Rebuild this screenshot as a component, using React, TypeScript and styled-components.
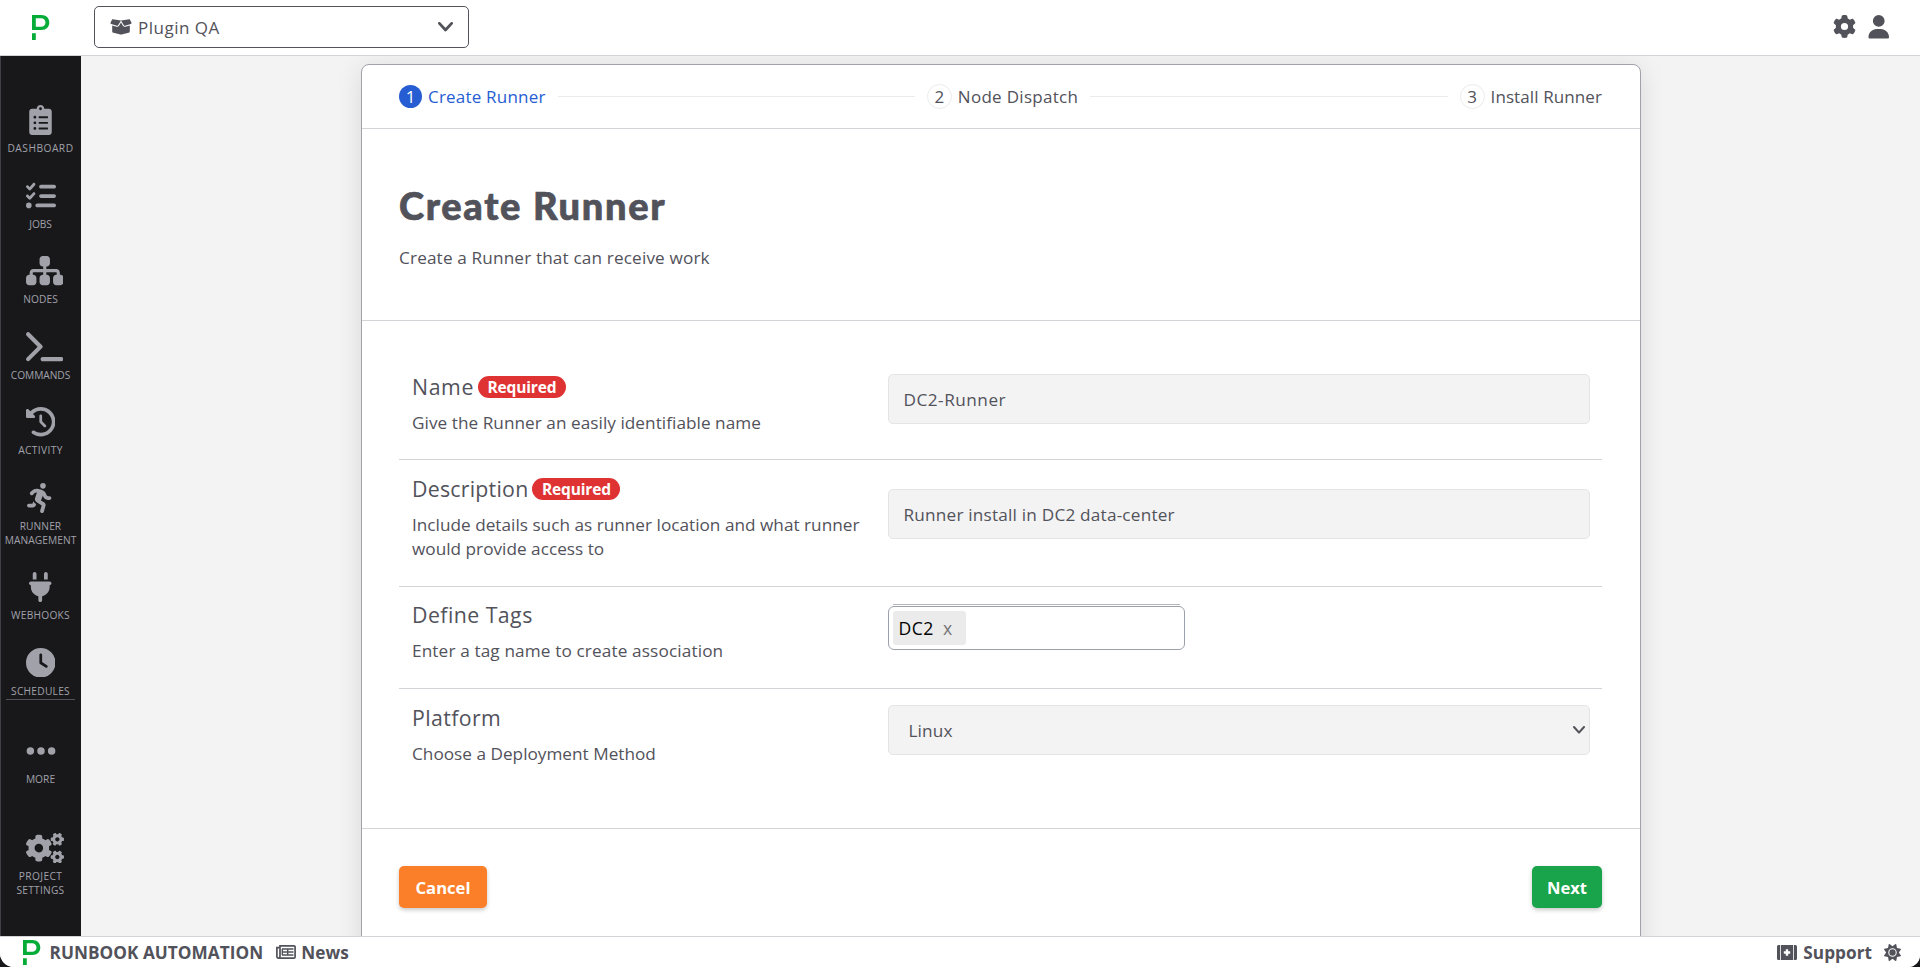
import React from "react";
import styled, { createGlobalStyle } from "styled-components";
import {
  FaBoxOpen, FaClock, FaClockRotateLeft, FaEllipsis, FaGear, FaListCheck,
  FaPersonRunning, FaPlug, FaSitemap, FaSun, FaTerminal, FaUser,
} from "react-icons/fa6";
import { FaClipboardList, FaCogs } from "react-icons/fa";

const ink = "#52525b";
const line = "#d4d4d8";

const GlobalStyle = createGlobalStyle`
  * { box-sizing: border-box; }
  html { background: #18181b; }
  body {
    margin: 0;
    font-family: "Open Sans", "Liberation Sans", sans-serif;
    font-size: 17.2px;
    color: ${ink};
    -webkit-font-smoothing: antialiased;
  }
`;

const Page = styled.div`
  display: flex;
  flex-direction: column;
  width: 100%;
  height: 967px;
  overflow: hidden;
  background: #f3f3f3;
  border-radius: 0 0 12px 14px;
`;

const Header = styled.header`
  display: flex;
  align-items: flex-start;
  flex: 0 0 56px;
  padding: 6px 30px 0 32px;
  background: #fff;
  border-bottom: 1px solid ${line};
`;

const HeaderLogo = styled.div`
  display: flex;
  width: 62px;
  padding-top: 9px;
`;

const ProjectPicker = styled.button`
  display: flex;
  align-items: center;
  width: 375px;
  height: 42px;
  padding: 0 15px;
  border: 1px solid ${ink};
  border-radius: 5px;
  background: #fff;
  color: ${ink};
  font: 500 17px/24px "Open Sans", sans-serif;
  letter-spacing: 0.5px;

  span { flex: 1; margin-left: 6px; padding-top: 2px; text-align: left; }
`;

const HeaderActions = styled.div`
  display: flex;
  gap: 11px;
  margin: 9px 0 0 auto;
`;

const Body = styled.div`
  display: flex;
  flex: 0 0 880px;
  overflow: hidden;
`;

const Sidebar = styled.nav`
  display: flex;
  flex-direction: column;
  align-items: center;
  flex: 0 0 81px;
  padding-top: 49px;
  background: #18181b;
  border-left: 1px solid #3f3f46;
`;

const NavItem = styled.a<{ $gap: number }>`
  display: flex;
  flex-direction: column;
  align-items: center;
  width: 80px;
  margin-bottom: ${(p) => p.$gap}px;
  padding-right: 1px;
  color: #a1a1aa;
`;

const NavIcon = styled.div<{ $w: number; $h: number }>`
  display: flex;
  align-items: center;
  justify-content: ${(p) => (p.$w > 30 ? "flex-start" : "center")};
  width: 30px;
  height: 30px;
  margin-bottom: 6px;

  svg {
    flex: none;
    width: ${(p) => p.$w}px;
    height: ${(p) => p.$h}px;
  }
`;

const NavLabel = styled.span<{ $ls: number }>`
  font-size: 10.2px;
  line-height: 14px;
  letter-spacing: ${(p) => p.$ls}px;
  text-align: center;
  white-space: nowrap;
`;

const NavDivider = styled.div`
  width: 69px;
  height: 1px;
  margin: -24.5px 1px 36px 0;
  background: #52525b;
`;

const Main = styled.main`
  flex: 1;
  padding: 8px 0 0 280px;
`;

const Card = styled.section`
  width: 1280px;
  height: 900px;
  background: #fff;
  border: 1px solid #a1a1aa;
  border-radius: 8px;
  box-shadow: 0 4px 26px rgba(0, 0, 0, 0.11);
`;

const Steps = styled.div`
  display: flex;
  align-items: center;
  height: 64px;
  padding: 0 38px 0 37px;
  border-bottom: 1px solid ${line};
`;

const Step = styled.div<{ $active?: boolean; $ls: number }>`
  display: flex;
  align-items: center;
  color: ${(p) => (p.$active ? "#265dd2" : ink)};
  font-weight: 500;
  font-size: 17px;
  line-height: 24px;
  letter-spacing: ${(p) => p.$ls}px;
  white-space: nowrap;
`;

const StepNumber = styled.span<{ $active?: boolean }>`
  display: flex;
  align-items: center;
  justify-content: center;
  width: ${(p) => (p.$active ? 23 : 25)}px;
  height: ${(p) => (p.$active ? 23 : 25)}px;
  margin-right: 6px;
  border: ${(p) => (p.$active ? "none" : "1px solid #ebebeb")};
  border-radius: 50%;
  background: ${(p) => (p.$active ? "#265dd2" : "#fff")};
  color: ${(p) => (p.$active ? "#fff" : ink)};
  letter-spacing: 0;
`;

const StepLine = styled.div`
  flex: 1;
  height: 1px;
  margin: 0 12px;
  background: #ebebed;
`;

const Intro = styled.div`
  height: 192px;
  padding: 54px 37px 0;
  border-bottom: 1px solid ${line};
`;

const Title = styled.h1`
  margin: 0;
  font-family: Lato, "Open Sans", sans-serif;
  font-weight: 900;
  font-size: 38px;
  line-height: 44px;
  letter-spacing: 1.7px;
  -webkit-text-stroke: 0.7px ${ink};
`;

const Lead = styled.p`
  margin: 19px 0 0;
  line-height: 24px;
  letter-spacing: 0.14px;
`;

const Form = styled.div`
  height: 508px;
  padding: 37px 38px 0 37px;
  border-bottom: 1px solid ${line};
`;

const Row = styled.div<{ $tall?: boolean; $last?: boolean }>`
  display: flex;
  height: ${(p) => (p.$tall ? 127 : 102)}px;
  padding: 16px 12px 0;
  border-bottom: ${(p) => (p.$last ? "none" : `1px solid ${line}`)};
`;

const RowText = styled.div<{ $top?: number }>`
  flex: 0 0 477px;
  padding: ${(p) => p.$top ?? 1}px 18px 0 1px;
`;

const RowTitle = styled.div`
  display: flex;
  align-items: center;
  height: 24px;
`;

const RowName = styled.span<{ $ls: number }>`
  font-weight: 500;
  font-size: 21.3px;
  line-height: 24px;
  letter-spacing: ${(p) => p.$ls}px;
`;

const Badge = styled.span`
  height: 22px;
  margin: 0 0 0 4px;
  padding: 0 9.5px;
  border-radius: 11px;
  background: #df3333;
  color: #fff;
  font-weight: 700;
  font-size: 15.5px;
  line-height: 22px;
  letter-spacing: -0.15px;
`;

const RowHelp = styled.p<{ $ls: number }>`
  margin: 12px 0 0;
  line-height: 24px;
  letter-spacing: ${(p) => p.$ls}px;
`;

const Field = styled.div<{ $top?: number; $inset?: number; $ls: number }>`
  display: flex;
  align-items: center;
  justify-content: space-between;
  flex: 0 0 702px;
  height: 50px;
  margin-top: ${(p) => p.$top ?? 0}px;
  padding: 0 4px 0 ${(p) => p.$inset ?? 14.5}px;
  border: 1px solid #e4e4e7;
  border-radius: 5px;
  background: #f3f3f3;
  font-weight: 500;
  letter-spacing: ${(p) => p.$ls}px;
`;

const TagColumn = styled.div`
  display: flex;
  flex-direction: column;
  width: 297px;
  padding-top: 1px;
`;

const TagTopLine = styled.div`
  height: 1px;
  margin: 0 5px 1px;
  background: #b5b5ba;
`;

const TagInput = styled.div`
  display: flex;
  height: 44px;
  padding: 4px;
  border: 1px solid #9ca0ab;
  border-radius: 6px;
  background: #fff;
`;

const Tag = styled.span`
  display: flex;
  align-items: center;
  width: 73px;
  height: 34px;
  padding-left: 5.5px;
  border-radius: 3px;
  background: #ebebeb;
  color: #000;
  font-size: 17.6px;
  line-height: 34px;
  letter-spacing: 0.5px;
`;

const TagRemove = styled.span`
  margin-left: 9px;
  color: #777;
`;

const Actions = styled.div`
  display: flex;
  justify-content: space-between;
  padding: 37px 38px 0 37px;
`;

const Button = styled.button<{ $tone: string; $w: number }>`
  width: ${(p) => p.$w}px;
  height: 42px;
  padding: 0;
  border: 0;
  border-radius: 5px;
  background: ${(p) => p.$tone};
  box-shadow: 0 2px 4px rgba(0, 0, 0, 0.22);
  color: #fff;
  font: 700 16.6px/43px "Open Sans", sans-serif;
`;

const Footer = styled.footer`
  display: flex;
  align-items: flex-start;
  flex: 0 0 31px;
  padding: 3px 19px 0 23px;
  background: #fff;
  border-top: 1px solid ${line};
`;

const FooterText = styled.span<{ $gap: number }>`
  margin-top: 1px;
  margin-left: ${(p) => p.$gap}px;
  font-weight: 700;
  line-height: 24px;
  letter-spacing: 0.04px;
  white-space: nowrap;
`;

const FooterIcon = styled.span<{ $gap: number | "auto"; $w: number; $h: number }>`
  display: flex;
  margin-top: ${(p) => 12 - p.$h / 2}px;
  margin-left: ${(p) => (p.$gap === "auto" ? "auto" : `${p.$gap}px`)};

  svg {
    width: ${(p) => p.$w}px;
    height: ${(p) => p.$h}px;
  }
`;

const Logo = () => (
  <svg width="18" height="25" viewBox="0 0 18 25">
    <path
      fill="#06ac38"
      fillRule="evenodd"
      d="M0 0h9.3C14.3 0 17.3 3 17.3 7.5S14.3 15 9.3 15H0zM3.8 3.3v8.4h5.3c2.7 0 4.4-1.6 4.4-4.2S11.8 3.3 9.1 3.3z"
    />
    <path fill="#06ac38" d="M0 18.2h3.8V25H0z" />
  </svg>
);

const NewspaperIcon = () => (
  <svg viewBox="0 0 20 14" fill="none" stroke="currentColor">
    <path
      strokeWidth="1.7"
      d="M4 .9H18A1.1 1.1 0 0 1 19.1 2V12A1.1 1.1 0 0 1 18 13.1H2.4A1.5 1.5 0 0 1 .9 11.6V2.6H4zM4 2.6V11.5A1.6 1.6 0 0 1 2.4 13.1"
    />
    <path strokeWidth="1.4" d="M6 4H17.5M6 7H17.5M6 10H17.5M11.7 4V10M6.3 4V10" />
  </svg>
);

const FirstAidIcon = () => (
  <svg viewBox="0 0 20 15" fill="currentColor">
    <path d="M1.5 0H3V15H1.5A1.5 1.5 0 0 1 0 13.5V1.5A1.5 1.5 0 0 1 1.5 0z" />
    <path d="M17 0H18.5A1.5 1.5 0 0 1 20 1.5V13.5A1.5 1.5 0 0 1 18.5 15H17z" />
    <path
      fillRule="evenodd"
      d="M3.8 0H16.2V15H3.8zM8.8 4.3V6.3H6.8V8.7H8.8V10.7H11.2V8.7H13.2V6.3H11.2V4.3z"
    />
  </svg>
);

const Chevron = ({ w, h, stroke }: { w: number; h: number; stroke: number }) => (
  <svg width={w} height={h} viewBox={`0 0 ${w} ${h}`} fill="none">
    <path
      d={`M${stroke / 2} ${stroke / 2}L${w / 2} ${h - stroke * 0.7}L${w - stroke / 2} ${stroke / 2}`}
      stroke="currentColor"
      strokeWidth={stroke}
      strokeLinecap="round"
      strokeLinejoin="round"
    />
  </svg>
);

type Nav = { icon: React.ReactNode; w: number; h: number; lines: [string, number][]; gap?: number };

const primaryNav: Nav[] = [
  { icon: <FaClipboardList />, w: 23, h: 30, lines: [["DASHBOARD", 0.5]] },
  { icon: <FaListCheck />, w: 30, h: 30, lines: [["JOBS", -0.1]] },
  { icon: <FaSitemap />, w: 37.5, h: 33.3, lines: [["NODES", 0.1]] },
  { icon: <FaTerminal />, w: 37.5, h: 33.3, lines: [["COMMANDS", -0.05]] },
  { icon: <FaClockRotateLeft />, w: 29.5, h: 29.5, lines: [["ACTIVITY", 0.38]] },
  { icon: <FaPersonRunning />, w: 26.3, h: 30, lines: [["RUNNER", 0.08], ["MANAGEMENT", 0.08]] },
  { icon: <FaPlug />, w: 22.5, h: 30, lines: [["WEBHOOKS", 0.25]] },
  { icon: <FaClock />, w: 29.5, h: 29.5, lines: [["SCHEDULES", 0.25]] },
];

const secondaryNav: Nav[] = [
  { icon: <FaEllipsis />, w: 30, h: 34, lines: [["MORE", 0.05]], gap: 47.3 },
  { icon: <FaCogs />, w: 38, h: 30.4, lines: [["PROJECT", 0.38], ["SETTINGS", 0.24]], gap: 0 },
];

const NavEntry = ({ icon, w, h, lines, gap = 25.5 }: Nav) => (
  <NavItem $gap={gap}>
    <NavIcon $w={w} $h={h}>{icon}</NavIcon>
    {lines.map(([text, ls]) => (
      <NavLabel key={text} $ls={ls}>{text}</NavLabel>
    ))}
  </NavItem>
);

export default function App() {
  return (
    <>
      <GlobalStyle />
      <Page>
        <Header>
          <HeaderLogo><Logo /></HeaderLogo>
          <ProjectPicker>
            <FaBoxOpen size={22} />
            <span>Plugin QA</span>
            <Chevron w={15} h={10} stroke={2.8} />
          </ProjectPicker>
          <HeaderActions>
            <FaGear size={23} />
            <FaUser size={23.5} />
          </HeaderActions>
        </Header>

        <Body>
          <Sidebar>
            {primaryNav.map((n) => <NavEntry key={n.lines[0][0]} {...n} />)}
            <NavDivider />
            {secondaryNav.map((n) => <NavEntry key={n.lines[0][0]} {...n} />)}
          </Sidebar>

          <Main>
            <Card>
              <Steps>
                <Step $active $ls={0.2}><StepNumber $active>1</StepNumber>Create Runner</Step>
                <StepLine />
                <Step $ls={0.3}><StepNumber>2</StepNumber>Node Dispatch</Step>
                <StepLine />
                <Step $ls={0.1}><StepNumber>3</StepNumber>Install Runner</Step>
              </Steps>

              <Intro>
                <Title>Create Runner</Title>
                <Lead>Create a Runner that can receive work</Lead>
              </Intro>

              <Form>
                <Row>
                  <RowText>
                    <RowTitle><RowName $ls={0.6}>Name</RowName><Badge>Required</Badge></RowTitle>
                    <RowHelp $ls={0.04}>Give the Runner an easily identifiable name</RowHelp>
                  </RowText>
                  <Field $ls={0.5}>DC2-Runner</Field>
                </Row>
                <Row $tall>
                  <RowText>
                    <RowTitle><RowName $ls={0.25}>Description</RowName><Badge>Required</Badge></RowTitle>
                    <RowHelp $ls={0.01}>Include details such as runner location and what runner would provide access to</RowHelp>
                  </RowText>
                  <Field $top={13} $ls={0.2}>Runner install in DC2 data-center</Field>
                </Row>
                <Row>
                  <RowText $top={0}>
                    <RowTitle><RowName $ls={0.45}>Define Tags</RowName></RowTitle>
                    <RowHelp $ls={0.13}>Enter a tag name to create association</RowHelp>
                  </RowText>
                  <TagColumn>
                    <TagTopLine />
                    <TagInput><Tag>DC2<TagRemove>x</TagRemove></Tag></TagInput>
                  </TagColumn>
                </Row>
                <Row $last>
                  <RowText $top={0.5}>
                    <RowTitle><RowName $ls={0.4}>Platform</RowName></RowTitle>
                    <RowHelp $ls={0.01}>Choose a Deployment Method</RowHelp>
                  </RowText>
                  <Field $inset={19.5} $ls={0.15}>Linux<Chevron w={12} h={8} stroke={2} /></Field>
                </Row>
              </Form>

              <Actions>
                <Button $tone="#fb7f28" $w={88}>Cancel</Button>
                <Button $tone="#19a34a" $w={70}>Next</Button>
              </Actions>
            </Card>
          </Main>
        </Body>

        <Footer>
          <Logo />
          <FooterText $gap={8.5}>RUNBOOK AUTOMATION</FooterText>
          <FooterIcon $gap={13} $w={20} $h={14}><NewspaperIcon /></FooterIcon>
          <FooterText $gap={5}>News</FooterText>
          <FooterIcon $gap="auto" $w={20} $h={15}><FirstAidIcon /></FooterIcon>
          <FooterText $gap={6}>Support</FooterText>
          <FooterIcon $gap={12} $w={17} $h={17}><FaSun /></FooterIcon>
        </Footer>
      </Page>
    </>
  );
}
